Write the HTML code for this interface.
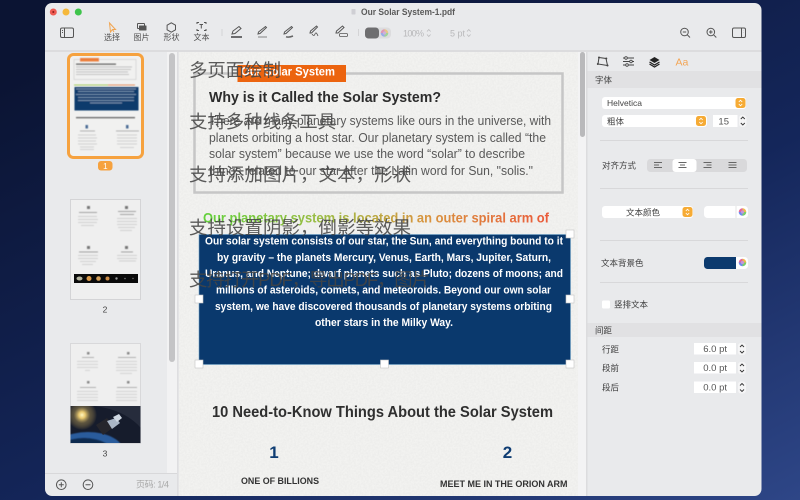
<!DOCTYPE html>
<html><head><meta charset="utf-8"><style>
html,body{margin:0;padding:0;width:800px;height:500px;overflow:hidden;background:#0e1838}
svg{display:block;filter:blur(.3px)}
text{font-family:"Liberation Sans","Noto Sans CJK SC",sans-serif}
.ui{font-size:8.5px;fill:#3f3f3f}
.lb{font-size:8px;fill:#4f4f4f}
.ov{font-size:18.4px;fill:#444;fill-opacity:.88}
.w{font-size:11px;font-weight:bold;fill:#fff}
.ic{fill:none;stroke:#555;stroke-width:1}
.div{stroke:#d8d8da;stroke-width:1}
.fld{fill:#fff}
.v{font-size:9.500px;fill:#555;text-anchor:end}
</style></head><body>
<svg width="800" height="500" viewBox="0 0 800 500" xmlns="http://www.w3.org/2000/svg">
<defs>
<linearGradient id="bg" x1="0.2" y1="0" x2="1" y2="1"><stop offset="0" stop-color="#0b1433"/><stop offset=".55" stop-color="#14265a"/><stop offset="1" stop-color="#2e4687"/></linearGradient>
<linearGradient id="rb" x1="0" x2="1" y1="0" y2="0"><stop offset="0" stop-color="#63d13c"/><stop offset=".35" stop-color="#9dbb45"/><stop offset=".65" stop-color="#d9943f"/><stop offset="1" stop-color="#ea5a3a"/></linearGradient>
<filter id="paper" x="0" y="0" width="100%" height="100%"><feTurbulence type="fractalNoise" baseFrequency=".55" numOctaves="3" seed="4"/><feColorMatrix values="0 0 0 0 .5  0 0 0 0 .5  0 0 0 0 .5  .5 0 0 0 -.17"/></filter>
<filter id="soft" x="-5%" y="-5%" width="110%" height="110%"><feGaussianBlur stdDeviation=".45"/></filter>
<radialGradient id="sun" cx=".5" cy=".5" r=".5"><stop offset="0" stop-color="#fff6c0"/><stop offset=".22" stop-color="#e6c66e"/><stop offset=".55" stop-color="#8c7a4c" stop-opacity=".6"/><stop offset="1" stop-color="#c9a552" stop-opacity="0"/></radialGradient>
<g id="wheel">
<path d="M0 0V-3.800A3.800 3.800 0 0 0 -3.800 0z" fill="#e2689a"/>
<path d="M0 0H3.800A3.800 3.800 0 0 0 0 -3.800z" fill="#efb94e"/>
<path d="M0 0V3.800A3.800 3.800 0 0 0 3.800 0z" fill="#78cf6c"/>
<path d="M0 0H-3.800A3.800 3.800 0 0 0 0 3.800z" fill="#6f8cf0"/>
<circle r="1.600" fill="#c596d8"/>
</g>
<clipPath id="win"><rect x="45" y="3" width="716.500" height="493" rx="7"/></clipPath>
<clipPath id="t3"><rect x="70.500" y="406" width="70" height="37"/></clipPath>
</defs>
<rect width="800" height="500" fill="url(#bg)"/>
<g clip-path="url(#win)">
<rect x="45" y="3" width="717" height="493" fill="#e9eaec"/>
<rect x="45" y="50" width="717" height="2" fill="#dcdcde"/>

<!-- sidebar -->
<rect x="167" y="52" width="11" height="421" fill="#f2f2f3"/>
<rect x="169" y="53" width="6" height="309" rx="3" fill="#c4c4c6"/>
<rect x="45" y="473" width="133" height="1" fill="#d8d8da"/>
<rect x="177" y="52" width="1.500" height="444" fill="#dedee0"/>

<!-- page -->
<rect x="179" y="52" width="399" height="444" fill="#f2f2f0"/>
<rect x="179" y="52" width="399" height="444" filter="url(#paper)" opacity=".4"/>
<rect x="578" y="52" width="8" height="444" fill="#f3f3f4"/>
<rect x="580" y="52" width="5" height="85" rx="2.500" fill="#b9b9bb"/>
<rect x="586" y="52" width="1.500" height="444" fill="#dcdcde"/>

<rect x="194.500" y="73.500" width="368" height="119" fill="none" stroke="#c6c6c6" stroke-width="2.500"/>
<rect x="237.500" y="65" width="108.500" height="17" fill="#ec640f"/>
<text x="241" y="75.500" font-size="12" font-weight="bold" fill="#fff" textLength="94" lengthAdjust="spacingAndGlyphs">Our Solar System</text>
<text x="209" y="102" font-size="15" font-weight="bold" fill="#2c2c2c" textLength="232" lengthAdjust="spacingAndGlyphs">Why is it Called the Solar System?</text>
<g font-size="12.500" fill="#585858">
<text x="209" y="125" textLength="342" lengthAdjust="spacingAndGlyphs">There are many planetary systems like ours in the universe, with</text>
<text x="209" y="142" textLength="337" lengthAdjust="spacingAndGlyphs">planets orbiting a host star. Our planetary system is called “the</text>
<text x="209" y="158" textLength="316" lengthAdjust="spacingAndGlyphs">solar system” because we use the word “solar” to describe</text>
<text x="209" y="175" textLength="324" lengthAdjust="spacingAndGlyphs">things related to our star after the Latin word for Sun, "solis."</text>
</g>
<text x="203" y="222.500" font-size="13.500" font-weight="bold" fill="url(#rb)" textLength="346" lengthAdjust="spacingAndGlyphs">Our planetary system is located in an outer spiral arm of</text>

<rect x="199" y="234.500" width="371.500" height="130" fill="#0a396d" stroke="#6fa3c8" stroke-width=".6"/>
<text class="w" x="205" y="244.500" textLength="358" lengthAdjust="spacingAndGlyphs">Our solar system consists of our star, the Sun, and everything bound to it</text>
<text class="w" x="217" y="261" textLength="334" lengthAdjust="spacingAndGlyphs">by gravity – the planets Mercury, Venus, Earth, Mars, Jupiter, Saturn,</text>
<text class="w" x="205" y="277" textLength="358" lengthAdjust="spacingAndGlyphs">Uranus, and Neptune; dwarf planets such as Pluto; dozens of moons; and</text>
<text class="w" x="216" y="293.500" textLength="335" lengthAdjust="spacingAndGlyphs">millions of asteroids, comets, and meteoroids. Beyond our own solar</text>
<text class="w" x="215" y="310" textLength="337" lengthAdjust="spacingAndGlyphs">system, we have discovered thousands of planetary systems orbiting</text>
<text class="w" x="315" y="326" textLength="138" lengthAdjust="spacingAndGlyphs">other stars in the Milky Way.</text>
<g fill="#fff" stroke="#c4c4c4" stroke-width=".6">
<rect x="566" y="230" width="8" height="8"/><rect x="195" y="295" width="8" height="8"/><rect x="566" y="295" width="8" height="8"/>
<rect x="195" y="360" width="8" height="8"/><rect x="380.500" y="360" width="8" height="8"/><rect x="566" y="360" width="8" height="8"/>
</g>

<text x="212" y="417" font-size="15.500" font-weight="bold" fill="#2f2f2f" textLength="341" lengthAdjust="spacingAndGlyphs">10 Need-to-Know Things About the Solar System</text>
<text x="274" y="458" font-size="17" font-weight="bold" fill="#0f3d73" text-anchor="middle">1</text>
<text x="507.500" y="458" font-size="17" font-weight="bold" fill="#0f3d73" text-anchor="middle">2</text>
<text x="241" y="484" font-size="9.500" font-weight="bold" fill="#333" textLength="78" lengthAdjust="spacingAndGlyphs">ONE OF BILLIONS</text>
<text x="440" y="487" font-size="9.500" font-weight="bold" fill="#333" textLength="127.500" lengthAdjust="spacingAndGlyphs">MEET ME IN THE ORION ARM</text>

<!-- overlay captions -->
<text class="ov" x="189" y="76.500" textLength="92">多页面绘制</text>
<text class="ov" x="189" y="128" textLength="147">支持多种线条工具</text>
<text class="ov" x="189" y="181" textLength="222">支持添加图片，文本，形状</text>
<text class="ov" x="189" y="234" textLength="222">支持设置阴影，倒影等效果</text>
<text class="ov" x="189" y="286" textLength="241" fill-opacity=".65">支持打开PDF，导出PDF，图片</text>

<!-- thumbnail 1 -->
<rect x="68.500" y="54.500" width="74" height="103" rx="5" fill="#f1f1f0" stroke="#f6a23f" stroke-width="3"/>
<g filter="url(#soft)">
<rect x="74" y="59.500" width="62" height="20" fill="none" stroke="#cfcfcf" stroke-width=".7"/>
<rect x="80" y="58" width="19" height="3.500" fill="#ec640f" opacity=".8"/>
<rect x="76" y="63.500" width="40" height="1.300" fill="#666"/>
<g fill="#bdbdbd"><rect x="76" y="66.500" width="56" height=".9"/><rect x="76" y="69" width="55" height=".9"/><rect x="76" y="71.500" width="52" height=".9"/><rect x="76" y="74" width="53" height=".9"/></g>
<rect x="74" y="84.500" width="34" height="1" fill="#a5cc5e"/><rect x="108" y="84.500" width="27" height="1" fill="#e49060"/>
<rect x="74.500" y="87" width="64" height="23.500" fill="#0e3a6c"/>
<g fill="#7f98b5"><rect x="76" y="88.500" width="60" height=".9"/><rect x="78" y="91" width="56" height=".9"/><rect x="76" y="94" width="60" height=".9"/><rect x="78" y="97" width="56" height=".9"/><rect x="78" y="100" width="56" height=".9"/><rect x="90" y="102.500" width="32" height=".9"/></g>
<rect x="76" y="117" width="59" height="1.300" fill="#666"/>
<rect x="85.500" y="125" width="2.500" height="3.500" fill="#4a6a94"/><rect x="126" y="125" width="2.500" height="3.500" fill="#4a6a94"/>
<g fill="#aaa"><rect x="80" y="130.500" width="15" height=".9"/><rect x="116" y="130.500" width="23" height=".9"/></g>
<g fill="#cdcdcd"><rect x="78" y="134.500" width="18" height=".9"/><rect x="78" y="137.500" width="19" height=".9"/><rect x="78" y="140.500" width="18" height=".9"/><rect x="78" y="143.500" width="19" height=".9"/><rect x="80" y="146.500" width="14" height=".9"/><rect x="80" y="149" width="14" height=".9"/>
<rect x="117" y="134.500" width="20" height=".9"/><rect x="117" y="137.500" width="20" height=".9"/><rect x="117" y="140.500" width="20" height=".9"/><rect x="117" y="143.500" width="20" height=".9"/><rect x="120" y="147" width="14" height=".9"/></g>
</g>
<rect x="98" y="161" width="14.500" height="9.500" rx="3" fill="#f6a23f"/>
<text x="105.300" y="169" font-size="8" fill="#fff" text-anchor="middle">1</text>

<!-- thumbnail 2 -->
<rect x="70.500" y="199.500" width="70" height="100" fill="#efefef" stroke="#d4d4d6"/>
<g filter="url(#soft)">
<g fill="#777"><rect x="87" y="206" width="3" height="3"/><rect x="125" y="206" width="3" height="3"/><rect x="87" y="246" width="3" height="3"/><rect x="125" y="246" width="3" height="3"/></g>
<g fill="#999"><rect x="79" y="212" width="18" height=".9"/><rect x="118" y="211" width="18" height=".9"/><rect x="120" y="214" width="14" height=".9"/><rect x="79" y="251.500" width="19" height=".9"/><rect x="121" y="251.500" width="12" height=".9"/></g>
<g fill="#cdcdcd"><rect x="78" y="216" width="19" height=".9"/><rect x="78" y="219" width="20" height=".9"/><rect x="78" y="222" width="19" height=".9"/><rect x="81" y="225" width="13" height=".9"/>
<rect x="117" y="218" width="20" height=".9"/><rect x="117" y="221" width="20" height=".9"/><rect x="117" y="224" width="20" height=".9"/><rect x="118" y="227" width="17" height=".9"/><rect x="120" y="230" width="12" height=".9"/>
<rect x="78" y="255" width="20" height=".9"/><rect x="78" y="258" width="20" height=".9"/><rect x="80" y="261" width="16" height=".9"/><rect x="82" y="264" width="11" height=".9"/>
<rect x="117" y="255" width="20" height=".9"/><rect x="117" y="258" width="20" height=".9"/><rect x="119" y="260.500" width="17" height=".9"/></g>
</g>
<rect x="74" y="274" width="64" height="9" fill="#0a0a0a"/>
<ellipse cx="79.500" cy="278.500" rx="3" ry="2" fill="#b6b6a0"/><circle cx="89" cy="278.500" r="2.500" fill="#d99a4c"/><circle cx="98.500" cy="278.500" r="2.300" fill="#d4a05a"/><circle cx="107.500" cy="278.500" r="2" fill="#c98a45"/><circle cx="116.500" cy="278.500" r="1.200" fill="#999"/><circle cx="125" cy="278.500" r=".8" fill="#777"/><circle cx="133" cy="278.500" r=".7" fill="#777"/>
<text x="105" y="312.500" font-size="8.500" fill="#444" text-anchor="middle">2</text>

<!-- thumbnail 3 -->
<rect x="70.500" y="343.500" width="70" height="100" fill="#efefef" stroke="#d8d8da"/>
<g filter="url(#soft)">
<g fill="#888"><rect x="87" y="352" width="2.500" height="2.500"/><rect x="127" y="352" width="2.500" height="2.500"/><rect x="87" y="381" width="2.500" height="2.500"/><rect x="127" y="381" width="2.500" height="2.500"/></g>
<g fill="#aaa"><rect x="82" y="357" width="12" height=".9"/><rect x="118" y="357" width="18" height=".9"/><rect x="80" y="387" width="16" height=".9"/><rect x="117" y="387" width="20" height=".9"/></g>
<g fill="#d0d0d0"><rect x="77" y="361" width="21" height=".9"/><rect x="77" y="364" width="21" height=".9"/><rect x="77" y="367" width="21" height=".9"/><rect x="85" y="370" width="5" height=".9"/>
<rect x="116" y="361" width="21" height=".9"/><rect x="116" y="364" width="21" height=".9"/><rect x="116" y="367" width="21" height=".9"/><rect x="116" y="370" width="21" height=".9"/><rect x="120" y="373" width="12" height=".9"/>
<rect x="77" y="391" width="21" height=".9"/><rect x="77" y="394" width="21" height=".9"/><rect x="77" y="397" width="21" height=".9"/><rect x="77" y="400" width="21" height=".9"/>
<rect x="116" y="391" width="21" height=".9"/><rect x="116" y="394" width="21" height=".9"/><rect x="116" y="397" width="21" height=".9"/><rect x="116" y="400" width="21" height=".9"/></g>
</g>
<g clip-path="url(#t3)">
<rect x="70.500" y="406" width="70" height="37" fill="#161c2c"/>
<circle cx="82" cy="415" r="15" fill="url(#sun)"/>
<path d="M95 406Q125 410 141 428V406Z" fill="#262c3c"/>
<ellipse cx="88" cy="452" rx="36" ry="20" fill="#2a5c9c" filter="url(#soft)"/>
<ellipse cx="84" cy="456" rx="31" ry="18" fill="#10294f" filter="url(#soft)"/>
<path d="M96 425l11-7 7 9-11 8z" fill="#26262c"/>
<path d="M107 421l9-3 4 5-8 6z" fill="#aab6c6"/>
<path d="M113 417l6-3 3 4-5 4z" fill="#cfd8e2"/>
</g>
<text x="105" y="456.500" font-size="8.500" fill="#444" text-anchor="middle">3</text>

<!-- sidebar footer -->
<circle cx="61.300" cy="484.700" r="4.800" class="ic"/><path d="M58.800 484.700h5M61.300 482.200v5" class="ic"/>
<circle cx="88" cy="484.700" r="4.800" class="ic"/><path d="M85.500 484.700h5" class="ic"/>
<text x="136" y="487.500" font-size="9" fill="#a8a8a8" textLength="33">页码: 1/4</text>

<!-- traffic lights -->
<circle cx="53.300" cy="12" r="3.500" fill="#ee5b52"/><circle cx="53.300" cy="12" r="1" fill="#8c1d18"/>
<circle cx="66" cy="12" r="3.500" fill="#f5b83b"/>
<circle cx="78.300" cy="12" r="3.500" fill="#3ec44b"/>
<rect x="351.500" y="9" width="4" height="5.500" rx=".6" fill="#cfcfd4"/>
<text x="361" y="15" font-size="9.500" font-weight="bold" fill="#5a5a5a" textLength="94" lengthAdjust="spacingAndGlyphs">Our Solar System-1.pdf</text>

<!-- toolbar left -->
<rect x="60.500" y="28" width="13" height="9.500" rx="1.500" class="ic"/><path d="M64.500 28v9.500" class="ic"/><path d="M62 30.500h1M62 32.500h1" class="ic" stroke-width=".7"/>
<path d="M109.500 23l1 9 2-2.500 3 0z" fill="none" stroke="#f1a550" stroke-width="1"/><path d="M112.500 29.500l1.500 2.500" stroke="#f1a550" stroke-width="1"/>
<text class="lb" x="112" y="40" text-anchor="middle">选择</text>
<rect x="137.500" y="23.500" width="7" height="5" rx=".5" class="ic"/><rect x="139" y="25.500" width="7.500" height="5" rx=".5" fill="#555"/>
<text class="lb" x="141.500" y="40" text-anchor="middle">图片</text>
<path d="M171.300 22.800l4.200 2.400v4.600l-4.200 2.400-4.200-2.400v-4.600z" class="ic"/>
<text class="lb" x="171.500" y="40" text-anchor="middle">形状</text>
<path d="M197 24v-1.500h2M204 22.500h2v1.500M206 29v1.500h-2M199 30.500h-2V29" class="ic"/><path d="M199.500 24.500h3.500M201.300 24.500v4" class="ic"/>
<text class="lb" x="201.500" y="40" text-anchor="middle">文本</text>
<rect x="221.500" y="29" width="1" height="7" fill="#d4d4d6"/>

<g fill="none" stroke="#555" stroke-width="1">
<path d="M232 34l1-3 6-4.500 2 2-6 5z"/><path d="M231 37h11" stroke="#222" stroke-width="1.300"/>
<path d="M258 34l.5-2 7-5.500 1 1-6.500 6z"/><path d="M258 37h9" stroke="#999" stroke-width="1.300"/>
<path d="M284 34l.5-2 7-5.500 1 1-6.500 6z"/><path d="M286 36.800q3 .8 7-.8" stroke="#666" stroke-width="1.500"/>
<path d="M310 33l.5-2 6-5 1 1-6 6z"/><path d="M312 34q2 3 3 0t3 2" stroke-width=".8"/>
<path d="M336 33l.5-2 6-5 1.500 1.500-6 5.500z"/><rect x="339.500" y="33.500" width="8" height="3" rx="1" stroke-width=".8"/>
</g>
<rect x="358" y="29" width="1" height="7" fill="#d4d4d6"/>
<rect x="365" y="27.500" width="26" height="11" rx="4" fill="#dcdcde"/>
<rect x="365" y="27.500" width="14" height="11" rx="3.500" fill="#6e6e70"/>
<use href="#wheel" x="384.500" y="33" opacity=".6"/>
<text x="403" y="36.500" font-size="9" fill="#b8b8ba" textLength="21">100%</text>
<path d="M427 31.500l1.800-2 1.800 2M427 34.500l1.800 2 1.800-2" fill="none" stroke="#b8b8ba" stroke-width=".7"/>
<text x="450" y="36.500" font-size="9" fill="#b8b8ba" textLength="15">5 pt</text>
<path d="M467 31.500l1.800-2 1.800 2M467 34.500l1.800 2 1.800-2" fill="none" stroke="#b8b8ba" stroke-width=".7"/>

<!-- toolbar right -->
<circle cx="684.500" cy="32" r="3.800" class="ic"/><path d="M687.300 34.800l2.700 2.700M682.800 32h3.400" class="ic"/>
<circle cx="710.800" cy="32" r="3.800" class="ic"/><path d="M713.600 34.800l2.700 2.700M709 32h3.600M710.800 30.200v3.600" class="ic"/>
<rect x="732.500" y="28" width="13" height="9.500" rx="1.500" class="ic"/><path d="M741.500 28v9.500" class="ic"/><path d="M743.500 30.500v.1M743.500 32.500v.1" class="ic"/>

<!-- inspector tabs -->
<path d="M599 57.500l7 1 1.500 7-9.500-1.500z" fill="none" stroke="#444" stroke-width="1"/><g fill="#444"><circle cx="599" cy="57.500" r="1"/><circle cx="606.300" cy="58.500" r="1"/><circle cx="607.500" cy="65.500" r="1"/><circle cx="597.800" cy="64" r="1"/></g>
<path d="M623 58h11M623 61.500h11M623 65h11" stroke="#444" stroke-width=".9"/><circle cx="626" cy="58" r="1.300" fill="#e9eaec" stroke="#444" stroke-width=".8"/><circle cx="631" cy="61.500" r="1.300" fill="#e9eaec" stroke="#444" stroke-width=".8"/><circle cx="627" cy="65" r="1.300" fill="#e9eaec" stroke="#444" stroke-width=".8"/>
<path d="M654.500 57l5 3-5 3-5-3z" fill="#222"/><path d="M649.500 62l5 3 5-3" fill="none" stroke="#222" stroke-width="1.200"/><path d="M649.500 64l5 3 5-3" fill="none" stroke="#222" stroke-width="1.200"/>
<text x="675.500" y="65.500" font-size="10.500" fill="#f3a555">Aa</text>

<rect x="587.500" y="71" width="174" height="17" fill="#e1e1e3"/>
<text class="ui" x="595" y="83">字体</text>
<rect x="602" y="97" width="144" height="12" rx="3" class="fld"/>
<text x="607" y="106" font-size="8.500" fill="#444">Helvetica</text>
<rect x="735.500" y="98" width="10" height="10" rx="2.500" fill="#f6ab35"/>
<path d="M738.800 102l1.700-1.800 1.700 1.800M738.800 104l1.700 1.800 1.700-1.800" fill="none" stroke="#fff" stroke-width=".8"/>
<rect x="602" y="115" width="105" height="12" rx="3" class="fld"/>
<text class="ui" x="607" y="124.500">粗体</text>
<rect x="696" y="116" width="10" height="10" rx="2.500" fill="#f6ab35"/>
<path d="M699.300 120l1.700-1.800 1.700 1.800M699.300 122l1.700 1.800 1.700-1.800" fill="none" stroke="#fff" stroke-width=".8"/>
<rect x="713" y="115" width="24.500" height="12" class="fld"/>
<text class="v" x="729" y="124.500">15</text>
<rect x="739" y="115" width="7.500" height="12" rx="3" fill="#f5f5f6"/>
<path d="M740.800 119l2-2 2 2M740.800 123l2 2 2-2" fill="none" stroke="#333" stroke-width=".9"/>
<line class="div" x1="600" y1="140.500" x2="748" y2="140.500"/>

<text class="ui" x="602" y="168.500">对齐方式</text>
<rect x="647" y="159" width="100" height="13" rx="3.500" fill="#d9d9db"/>
<rect x="672.500" y="159" width="24" height="13" rx="3" fill="#fff"/>
<g stroke="#666" stroke-width="1"><path d="M654 162.500h8M654 165h5M654 167.500h8"/><path d="M678.500 162.500h8M680 165h5M678.500 167.500h8"/><path d="M703.500 162.500h8M706.500 165h5M703.500 167.500h8"/><path d="M728.500 162.500h8M728.500 165h8M728.500 167.500h8"/></g>
<line class="div" x1="600" y1="188.500" x2="748" y2="188.500"/>

<rect x="602" y="206" width="91" height="12" rx="3" class="fld"/>
<text class="ui" x="626" y="215.500">文本颜色</text>
<rect x="682.500" y="207" width="10" height="10" rx="2.500" fill="#f6ab35"/>
<path d="M685.800 211l1.700-1.800 1.700 1.800M685.800 213l1.700 1.800 1.700-1.800" fill="none" stroke="#fff" stroke-width=".8"/>
<rect x="704" y="206" width="44" height="12" rx="3.500" class="fld"/>
<line x1="736" y1="206" x2="736" y2="218" stroke="#e4e4e6"/>
<use href="#wheel" x="742.500" y="212"/>
<line class="div" x1="600" y1="240.500" x2="748" y2="240.500"/>

<text class="ui" x="601" y="266">文本背景色</text>
<rect x="704" y="257" width="44" height="12" rx="3.500" class="fld"/>
<path d="M707.500 257H736v12h-28.500a3.500 3.500 0 0 1-3.500-3.500v-5a3.500 3.500 0 0 1 3.500-3.500z" fill="#0c3a6e"/>
<use href="#wheel" x="742.500" y="262.500"/>
<line class="div" x1="600" y1="282.500" x2="748" y2="282.500"/>

<rect x="602" y="300.500" width="8" height="8" rx="1.500" fill="#fff"/>
<text class="ui" x="614" y="307.500">竖排文本</text>

<rect x="587.500" y="323" width="174" height="14" fill="#e1e1e3"/>
<text class="ui" x="595" y="333.500">间距</text>

<text class="ui" x="602" y="352.500">行距</text>
<rect x="694" y="343" width="42" height="11.500" class="fld"/><text class="v" x="727" y="352">6.0 pt</text>
<rect x="738" y="343" width="8" height="12" rx="3" fill="#f5f5f6"/><path d="M740 347l2-2 2 2M740 351l2 2 2-2" fill="none" stroke="#333" stroke-width=".9"/>
<text class="ui" x="602" y="371">段前</text>
<rect x="694" y="362" width="42" height="11.500" class="fld"/><text class="v" x="727" y="371">0.0 pt</text>
<rect x="738" y="362" width="8" height="12" rx="3" fill="#f5f5f6"/><path d="M740 366l2-2 2 2M740 370l2 2 2-2" fill="none" stroke="#333" stroke-width=".9"/>
<text class="ui" x="602" y="390.500">段后</text>
<rect x="694" y="381.500" width="42" height="11.500" class="fld"/><text class="v" x="727" y="390.500">0.0 pt</text>
<rect x="738" y="381.500" width="8" height="12" rx="3" fill="#f5f5f6"/><path d="M740 385.500l2-2 2 2M740 389.500l2 2 2-2" fill="none" stroke="#333" stroke-width=".9"/>
</g>
</svg>
</body></html>
